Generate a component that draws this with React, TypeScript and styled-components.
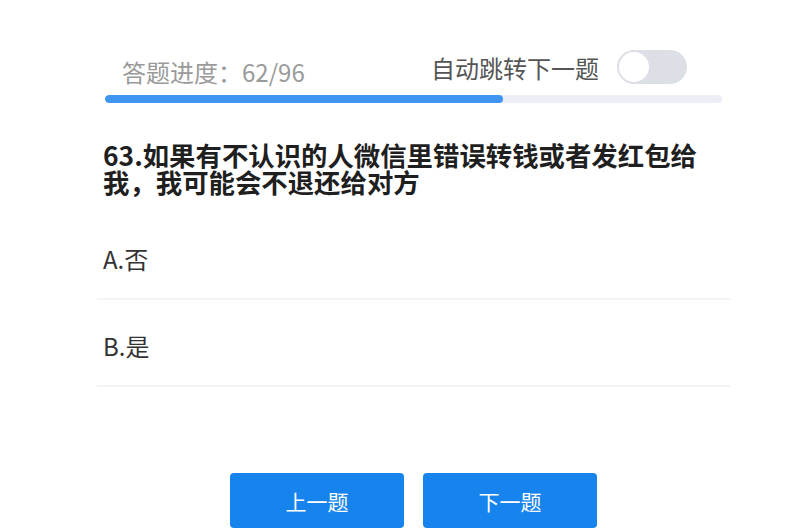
import styled, { createGlobalStyle } from "styled-components";

const GlobalStyle = createGlobalStyle`
  body {
    margin: 0;
    background: #ffffff;
    font-family: "Noto Sans CJK SC", "Noto Sans", sans-serif;
  }
`;

const Page = styled.div`
  width: 633px;
  margin-left: 97px;
  padding-top: 50px;
`;

const Header = styled.div`
  display: flex;
  align-items: center;
  justify-content: space-between;
  height: 34px;
  padding: 0 43px 0 25px;
`;

const Progress = styled.span`
  font-size: 24px;
  color: #9a9a9a;
  margin-top: 9px;
`;

const AutoJump = styled.label`
  display: flex;
  align-items: center;
  gap: 18px;
  font-size: 24px;
  color: #555555;
`;

const Switch = styled.span<{ $on: boolean }>`
  position: relative;
  display: inline-block;
  width: 70px;
  height: 34px;
  border-radius: 17px;
  background: ${(p) => (p.$on ? "#3f95f2" : "#dcdfe6")};

  &::after {
    content: "";
    position: absolute;
    top: 2px;
    left: ${(p) => (p.$on ? "38px" : "2px")};
    width: 30px;
    height: 30px;
    border-radius: 50%;
    background: #ffffff;
  }
`;

const Track = styled.div`
  height: 8px;
  margin: 11px 8px 0;
  border-radius: 4px;
  background: #ebeef4;
  overflow: hidden;
`;

const Fill = styled.div`
  height: 100%;
  border-radius: 4px;
  background: #3f95f2;
`;

const Question = styled.h2`
  margin: 38px 0 0;
  padding: 0 20px 0 6px;
  font-size: 26.4px;
  line-height: 27px;
  font-weight: 700;
  color: #1f1f1f;
`;

const Options = styled.div`
  margin-top: 18px;
`;

const Option = styled.div`
  display: flex;
  align-items: flex-end;
  height: 87px;
  padding: 0 0 22px 6px;
  box-sizing: border-box;
  border-bottom: 2px solid #f4f4f6;
  font-size: 24px;
  color: #333333;
`;

const Buttons = styled.div`
  display: flex;
  justify-content: center;
  gap: 19px;
  margin-top: 86px;
`;

const NavButton = styled.button`
  width: 174px;
  height: 55px;
  border: none;
  border-radius: 4px;
  background: #1784ee;
  color: #ffffff;
  font-family: inherit;
  font-size: 21px;
  cursor: pointer;
`;

const current = 62;
const total = 96;

export default function App() {
  return (
    <>
      <GlobalStyle />
      <Page>
        <Header>
          <Progress>
            答题进度：{current}/{total}
          </Progress>
          <AutoJump>
            自动跳转下一题
            <Switch $on={false} />
          </AutoJump>
        </Header>
        <Track>
          <Fill style={{ width: `${(current / total) * 100}%` }} />
        </Track>
        <Question>
          63.如果有不认识的人微信里错误转钱或者发红包给我，我可能会不退还给对方
        </Question>
        <Options>
          <Option>A.否</Option>
          <Option>B.是</Option>
        </Options>
        <Buttons>
          <NavButton>上一题</NavButton>
          <NavButton>下一题</NavButton>
        </Buttons>
      </Page>
    </>
  );
}
